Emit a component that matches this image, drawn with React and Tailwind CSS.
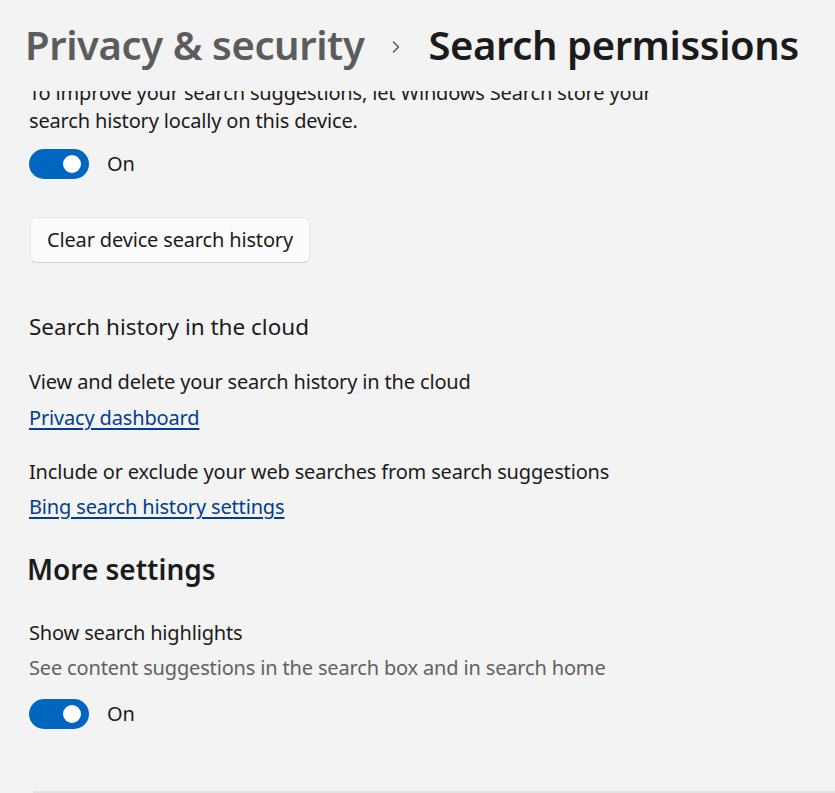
import React from "react";

function Toggle() {
  return (
    <div className="flex items-center gap-[18px]">
      <div className="relative w-[60px] h-[30px] rounded-full bg-[#0067c0]">
        <div className="absolute right-[8px] top-[6px] w-[18px] h-[18px] rounded-full bg-white" />
      </div>
      <span className="text-[20px] leading-[28px] text-[#1b1b1b]">On</span>
    </div>
  );
}

export default function App() {
  return (
    <div className="w-[835px] h-[793px] bg-[#f3f3f3] flex flex-col overflow-hidden font-['Noto_Sans',sans-serif] text-[#1b1b1b]">
      <header className="h-[91px] shrink-0 flex items-start pt-[18px] pl-[25px] relative z-10 bg-[#f3f3f3]">
        <span className="text-[40px] leading-[54px] font-semibold text-[#5c5c5c] tracking-[-0.01em]">Privacy &amp; security</span>
        <svg className="mx-[26px] mt-[21px]" width="12" height="16" viewBox="0 0 12 16" fill="none">
          <path d="M3.5 3 L8.5 8 L3.5 13" stroke="#5c5c5c" strokeWidth="1.6" strokeLinecap="round" strokeLinejoin="round" />
        </svg>
        <span className="text-[40px] leading-[54px] font-semibold text-[#1b1b1b] tracking-[-0.01em]">Search permissions</span>
      </header>
      <div className="flex-1 overflow-hidden relative">
        <div className="-mt-[12px] pl-[29px] flex flex-col items-start text-[20px] leading-[28px] tracking-[-0.008em]">
          <p>To improve your search suggestions, let Windows Search store your</p>
          <p>search history locally on this device.</p>
          <div className="mt-[14px]">
            <Toggle />
          </div>
          <button className="mt-[38px] ml-[1px] h-[46px] px-[16px] rounded-[6px] bg-[#fbfbfb] border border-[#e5e5e5] border-b-[#cccccc] text-[20px] text-[#1b1b1b] tracking-[-0.008em]">
            Clear device search history
          </button>
          <p className="mt-[50px] text-[22.5px] tracking-normal">Search history in the cloud</p>
          <p className="mt-[27px]">View and delete your search history in the cloud</p>
          <a className="mt-[8px] text-[#003e92] underline underline-offset-[3px]">Privacy dashboard</a>
          <p className="mt-[26px]">Include or exclude your web searches from search suggestions</p>
          <a className="mt-[7px] text-[#003e92] underline underline-offset-[3px]">Bing search history settings</a>
          <h2 className="mt-[28px] -ml-[2px] text-[28px] leading-[40px] font-semibold tracking-normal">More settings</h2>
          <p className="mt-[30px]">Show search highlights</p>
          <p className="mt-[7px] text-[#616161]">See content suggestions in the search box and in search home</p>
          <div className="mt-[17px]">
            <Toggle />
          </div>
        </div>
        <div className="absolute left-[33px] right-0 bottom-0 h-[2px] bg-[#e2e2e2]" />
      </div>
    </div>
  );
}
